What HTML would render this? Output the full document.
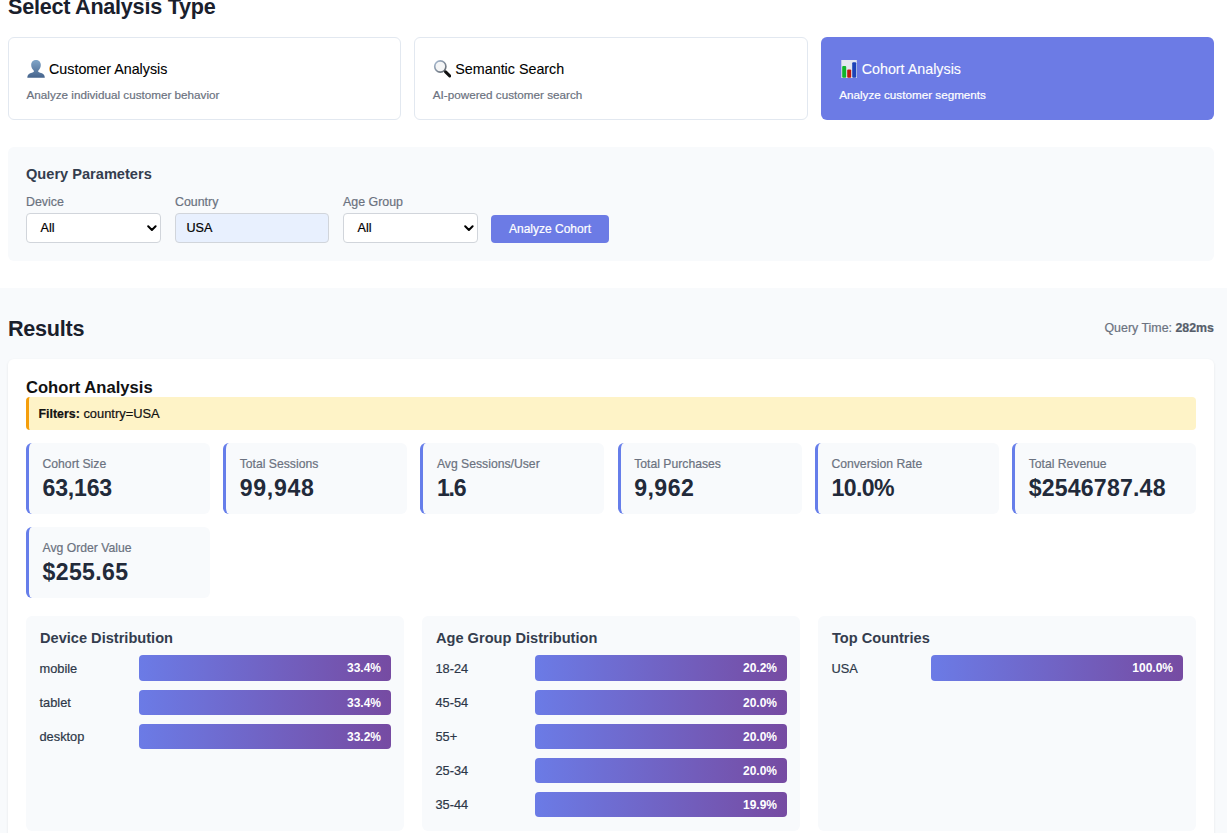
<!DOCTYPE html>
<html><head><meta charset="utf-8"><title>Cohort Analysis</title>
<style>
html,body{margin:0;padding:0;background:#fff;width:1227px;height:833px;overflow:hidden;position:relative;font-family:"Liberation Sans",sans-serif;}
.t{position:absolute;white-space:nowrap;font-family:"Liberation Sans",sans-serif;}
.r{-webkit-text-stroke:0.2px currentColor;}
.r2{-webkit-text-stroke:0.1px currentColor;}
b{font-weight:700;}
</style></head><body>
<div class="t" style="left:8px;top:-3.98px;font-size:21.6px;line-height:21.6px;font-weight:700;color:#1a202c;letter-spacing:-0.25px;">Select Analysis Type</div><div style="position:absolute;left:8px;top:37px;width:393.33px;height:83px;box-sizing:border-box;border:1px solid #e2e8f0;border-radius:6px;background:#fff;"></div><div style="position:absolute;left:26.8px;top:59px;width:18px;height:19px"><svg width="18" height="19" viewBox="0 0 18 19"><defs><linearGradient id="pg" x1="0" y1="0" x2="0" y2="1"><stop offset="0" stop-color="#80a5c8"/><stop offset="1" stop-color="#46648c"/></linearGradient></defs><path d="M9 1.1c2.7 0 4.8 2 4.8 4.9 0 1.9-.8 3.8-2 4.9-.5.5-.7 1-.6 1.6.1.6 1.3 1 3.1 1.6 2.4.8 3.4 2.3 3.5 4.6H.3c.1-2.3 1.1-3.8 3.5-4.6 1.8-.6 3-1 3.1-1.6.1-.6-.1-1.1-.6-1.6C5 9.8 4.2 7.9 4.2 6 4.2 3.1 6.3 1.1 9 1.1z" fill="url(#pg)"/></svg></div><div class="t r2" style="left:49px;top:62.30px;font-size:14.3px;line-height:14.3px;font-weight:400;color:#000;">Customer Analysis</div><div class="t r" style="left:26.5px;top:88.70px;font-size:11.7px;line-height:11.7px;font-weight:400;color:#6b7280;">Analyze individual customer behavior</div><div style="position:absolute;left:414.33px;top:37px;width:393.33px;height:83px;box-sizing:border-box;border:1px solid #e2e8f0;border-radius:6px;background:#fff;"></div><div style="position:absolute;left:433.13px;top:59px;width:18px;height:19px"><svg width="18" height="19" viewBox="0 0 18 19"><defs><linearGradient id="sg" x1="0" y1="0" x2="1" y2="1"><stop offset="0" stop-color="#a8bcd4"/><stop offset="1" stop-color="#5e6268"/></linearGradient></defs><circle cx="7.3" cy="7.5" r="5.6" fill="#f4f5f6" stroke="url(#sg)" stroke-width="1.6"/><path d="M12.6 12.9 L16.7 16.9" stroke="#111" stroke-width="3" stroke-linecap="round"/></svg></div><div class="t r2" style="left:455.33px;top:62.30px;font-size:14.3px;line-height:14.3px;font-weight:400;color:#000;">Semantic Search</div><div class="t r" style="left:432.83px;top:88.70px;font-size:11.7px;line-height:11.7px;font-weight:400;color:#6b7280;">AI-powered customer search</div><div style="position:absolute;left:820.67px;top:37px;width:393.33px;height:83px;background:#6c7be5;border-radius:6px;"></div><div style="position:absolute;left:839.4699999999999px;top:59px;width:18px;height:19px"><svg width="18" height="19" viewBox="0 0 18 19"><rect x="2.3" y="1" width="15.5" height="18" fill="#e4e8f0"/><rect x="3.2" y="7" width="4" height="11.8" rx="1" fill="#0fb52a"/><rect x="8.2" y="10.4" width="4" height="8.4" rx="1" fill="#c01a10"/><rect x="13.2" y="3.3" width="4" height="15.5" rx="1" fill="#1d43b8"/></svg></div><div class="t r2" style="left:861.67px;top:62.30px;font-size:14.3px;line-height:14.3px;font-weight:400;color:#fff;">Cohort Analysis</div><div class="t r" style="left:839.17px;top:88.70px;font-size:11.7px;line-height:11.7px;font-weight:400;color:#fff;">Analyze customer segments</div><div style="position:absolute;left:8px;top:147px;width:1206px;height:114px;background:#f8fafc;border-radius:6px;"></div><div class="t" style="left:26px;top:166.64px;font-size:14.6px;line-height:14.6px;font-weight:700;color:#343d4e;">Query Parameters</div><div class="t r" style="left:26px;top:195.50px;font-size:12.4px;line-height:12.4px;font-weight:400;color:#6b7280;">Device</div><div class="t r" style="left:175px;top:195.50px;font-size:12.4px;line-height:12.4px;font-weight:400;color:#6b7280;">Country</div><div class="t r" style="left:343px;top:195.50px;font-size:12.4px;line-height:12.4px;font-weight:400;color:#6b7280;">Age Group</div><div style="position:absolute;left:26px;top:213px;width:135px;height:30px;box-sizing:border-box;border:1px solid #d1d5db;border-radius:4px;background:#fff"><svg width="10" height="7" viewBox="0 0 10 7" style="position:absolute;right:3.5px;top:10.7px"><path d="M1.2 1.3 L4.9 5 L8.6 1.3" fill="none" stroke="#000" stroke-width="2" stroke-linecap="round" stroke-linejoin="round"/></svg></div><div class="t r" style="left:40.5px;top:222.33px;font-size:12.6px;line-height:12.6px;font-weight:400;color:#000;">All</div><div style="position:absolute;left:175px;top:213px;width:154px;height:30px;box-sizing:border-box;border:1px solid #d1d5db;border-radius:4px;background:#e8f0fe"></div><div class="t r" style="left:186.5px;top:222.33px;font-size:12.6px;line-height:12.6px;font-weight:400;color:#000;">USA</div><div style="position:absolute;left:343px;top:213px;width:135px;height:30px;box-sizing:border-box;border:1px solid #d1d5db;border-radius:4px;background:#fff"><svg width="10" height="7" viewBox="0 0 10 7" style="position:absolute;right:3.5px;top:10.7px"><path d="M1.2 1.3 L4.9 5 L8.6 1.3" fill="none" stroke="#000" stroke-width="2" stroke-linecap="round" stroke-linejoin="round"/></svg></div><div class="t r" style="left:357.5px;top:222.33px;font-size:12.6px;line-height:12.6px;font-weight:400;color:#000;">All</div><div style="position:absolute;left:491px;top:215px;width:118px;height:28px;background:#6c7be5;border-radius:4px;"></div><div class="t r" style="left:509px;top:222.84px;font-size:12px;line-height:12px;font-weight:400;color:#fff;">Analyze Cohort</div><div style="position:absolute;left:0px;top:288px;width:1227px;height:545px;background:#f8fafc;"></div><div class="t" style="left:8px;top:318.32px;font-size:21.6px;line-height:21.6px;font-weight:700;color:#1a202c;letter-spacing:-0.25px;">Results</div><div class="t r" style="right:13px;top:322.00px;font-size:12.4px;line-height:12.4px;font-weight:400;color:#6b7280;">Query Time: <b style="color:#565e6b">282ms</b></div><div style="position:absolute;left:8px;top:359px;width:1206px;height:520px;background:#fff;border-radius:6px;box-shadow:0 1px 3px rgba(0,0,0,0.08);"></div><div class="t" style="left:26px;top:379.95px;font-size:16.6px;line-height:16.6px;font-weight:700;color:#111;">Cohort Analysis</div><div style="position:absolute;left:26px;top:397px;width:1170px;height:33px;box-sizing:border-box;background:#fef3c7;border-left:3px solid #f59e0b;border-radius:4px;"></div><div class="t r" style="left:38.5px;top:408.08px;font-size:12.9px;line-height:12.9px;font-weight:400;color:#111;"><b style="font-size:12.4px">Filters:</b> country=USA</div><div style="position:absolute;left:26.0px;top:443px;width:183.83px;height:71px;box-sizing:border-box;background:#f8fafc;border-left:3px solid #667eea;border-radius:6px;"></div><div class="t r" style="left:42.5px;top:457.67px;font-size:12.2px;line-height:12.2px;font-weight:400;color:#6b7280;">Cohort Size</div><div class="t" style="left:42.5px;top:476.65px;font-size:23.1px;line-height:23.1px;font-weight:700;color:#222a3a;letter-spacing:-0.2px;">63,163</div><div style="position:absolute;left:223.23px;top:443px;width:183.83px;height:71px;box-sizing:border-box;background:#f8fafc;border-left:3px solid #667eea;border-radius:6px;"></div><div class="t r" style="left:239.73333333333335px;top:457.67px;font-size:12.2px;line-height:12.2px;font-weight:400;color:#6b7280;">Total Sessions</div><div class="t" style="left:239.73333333333335px;top:476.65px;font-size:23.1px;line-height:23.1px;font-weight:700;color:#222a3a;letter-spacing:0.7px;">99,948</div><div style="position:absolute;left:420.47px;top:443px;width:183.83px;height:71px;box-sizing:border-box;background:#f8fafc;border-left:3px solid #667eea;border-radius:6px;"></div><div class="t r" style="left:436.9666666666667px;top:457.67px;font-size:12.2px;line-height:12.2px;font-weight:400;color:#6b7280;">Avg Sessions/User</div><div class="t" style="left:436.9666666666667px;top:476.65px;font-size:23.1px;line-height:23.1px;font-weight:700;color:#222a3a;letter-spacing:-1.2px;">1.6</div><div style="position:absolute;left:617.7px;top:443px;width:183.83px;height:71px;box-sizing:border-box;background:#f8fafc;border-left:3px solid #667eea;border-radius:6px;"></div><div class="t r" style="left:634.2px;top:457.67px;font-size:12.2px;line-height:12.2px;font-weight:400;color:#6b7280;">Total Purchases</div><div class="t" style="left:634.2px;top:476.65px;font-size:23.1px;line-height:23.1px;font-weight:700;color:#222a3a;letter-spacing:0.45px;">9,962</div><div style="position:absolute;left:814.93px;top:443px;width:183.83px;height:71px;box-sizing:border-box;background:#f8fafc;border-left:3px solid #667eea;border-radius:6px;"></div><div class="t r" style="left:831.4333333333334px;top:457.67px;font-size:12.2px;line-height:12.2px;font-weight:400;color:#6b7280;">Conversion Rate</div><div class="t" style="left:831.4333333333334px;top:476.65px;font-size:23.1px;line-height:23.1px;font-weight:700;color:#222a3a;letter-spacing:-0.6px;">10.0%</div><div style="position:absolute;left:1012.17px;top:443px;width:183.83px;height:71px;box-sizing:border-box;background:#f8fafc;border-left:3px solid #667eea;border-radius:6px;"></div><div class="t r" style="left:1028.6666666666667px;top:457.67px;font-size:12.2px;line-height:12.2px;font-weight:400;color:#6b7280;">Total Revenue</div><div class="t" style="left:1028.6666666666667px;top:476.65px;font-size:23.1px;line-height:23.1px;font-weight:700;color:#222a3a;letter-spacing:0.2px;">$2546787.48</div><div style="position:absolute;left:26.0px;top:527px;width:183.83px;height:71px;box-sizing:border-box;background:#f8fafc;border-left:3px solid #667eea;border-radius:6px;"></div><div class="t r" style="left:42.5px;top:541.67px;font-size:12.2px;line-height:12.2px;font-weight:400;color:#6b7280;">Avg Order Value</div><div class="t" style="left:42.5px;top:560.65px;font-size:23.1px;line-height:23.1px;font-weight:700;color:#222a3a;letter-spacing:0.35px;">$255.65</div><div style="position:absolute;left:26px;top:616px;width:378px;height:215px;background:#f8fafc;border-radius:6px;"></div><div class="t" style="left:40px;top:630.64px;font-size:14.6px;line-height:14.6px;font-weight:700;color:#343d4e;">Device Distribution</div><div class="t r" style="left:39.5px;top:662.86px;font-size:12.8px;line-height:12.8px;font-weight:400;color:#2d3748;">mobile</div><div style="position:absolute;left:139px;top:655px;width:252px;height:26px;background:linear-gradient(90deg,#6b7be6,#764ba2);border-radius:4px;"></div><div class="t" style="right:846px;top:661.84px;font-size:12px;line-height:12px;font-weight:700;color:#fff;">33.4%</div><div class="t r" style="left:39.5px;top:696.86px;font-size:12.8px;line-height:12.8px;font-weight:400;color:#2d3748;">tablet</div><div style="position:absolute;left:139px;top:690px;width:252px;height:25px;background:linear-gradient(90deg,#6b7be6,#764ba2);border-radius:4px;"></div><div class="t" style="right:846px;top:696.84px;font-size:12px;line-height:12px;font-weight:700;color:#fff;">33.4%</div><div class="t r" style="left:39.5px;top:730.86px;font-size:12.8px;line-height:12.8px;font-weight:400;color:#2d3748;">desktop</div><div style="position:absolute;left:139px;top:724px;width:252px;height:25px;background:linear-gradient(90deg,#6b7be6,#764ba2);border-radius:4px;"></div><div class="t" style="right:846px;top:730.84px;font-size:12px;line-height:12px;font-weight:700;color:#fff;">33.2%</div><div style="position:absolute;left:422px;top:616px;width:378px;height:215px;background:#f8fafc;border-radius:6px;"></div><div class="t" style="left:436px;top:630.64px;font-size:14.6px;line-height:14.6px;font-weight:700;color:#343d4e;">Age Group Distribution</div><div class="t r" style="left:435.5px;top:662.86px;font-size:12.8px;line-height:12.8px;font-weight:400;color:#2d3748;">18-24</div><div style="position:absolute;left:535px;top:655px;width:252px;height:26px;background:linear-gradient(90deg,#6b7be6,#764ba2);border-radius:4px;"></div><div class="t" style="right:450px;top:661.84px;font-size:12px;line-height:12px;font-weight:700;color:#fff;">20.2%</div><div class="t r" style="left:435.5px;top:696.86px;font-size:12.8px;line-height:12.8px;font-weight:400;color:#2d3748;">45-54</div><div style="position:absolute;left:535px;top:690px;width:252px;height:25px;background:linear-gradient(90deg,#6b7be6,#764ba2);border-radius:4px;"></div><div class="t" style="right:450px;top:696.84px;font-size:12px;line-height:12px;font-weight:700;color:#fff;">20.0%</div><div class="t r" style="left:435.5px;top:730.86px;font-size:12.8px;line-height:12.8px;font-weight:400;color:#2d3748;">55+</div><div style="position:absolute;left:535px;top:724px;width:252px;height:25px;background:linear-gradient(90deg,#6b7be6,#764ba2);border-radius:4px;"></div><div class="t" style="right:450px;top:730.84px;font-size:12px;line-height:12px;font-weight:700;color:#fff;">20.0%</div><div class="t r" style="left:435.5px;top:764.86px;font-size:12.8px;line-height:12.8px;font-weight:400;color:#2d3748;">25-34</div><div style="position:absolute;left:535px;top:758px;width:252px;height:25px;background:linear-gradient(90deg,#6b7be6,#764ba2);border-radius:4px;"></div><div class="t" style="right:450px;top:764.84px;font-size:12px;line-height:12px;font-weight:700;color:#fff;">20.0%</div><div class="t r" style="left:435.5px;top:798.86px;font-size:12.8px;line-height:12.8px;font-weight:400;color:#2d3748;">35-44</div><div style="position:absolute;left:535px;top:792px;width:252px;height:25px;background:linear-gradient(90deg,#6b7be6,#764ba2);border-radius:4px;"></div><div class="t" style="right:450px;top:798.84px;font-size:12px;line-height:12px;font-weight:700;color:#fff;">19.9%</div><div style="position:absolute;left:818px;top:616px;width:378px;height:215px;background:#f8fafc;border-radius:6px;"></div><div class="t" style="left:832px;top:630.64px;font-size:14.6px;line-height:14.6px;font-weight:700;color:#343d4e;">Top Countries</div><div class="t r" style="left:831.5px;top:662.86px;font-size:12.8px;line-height:12.8px;font-weight:400;color:#2d3748;">USA</div><div style="position:absolute;left:931px;top:655px;width:252px;height:26px;background:linear-gradient(90deg,#6b7be6,#764ba2);border-radius:4px;"></div><div class="t" style="right:54px;top:661.84px;font-size:12px;line-height:12px;font-weight:700;color:#fff;">100.0%</div>
</body></html>
